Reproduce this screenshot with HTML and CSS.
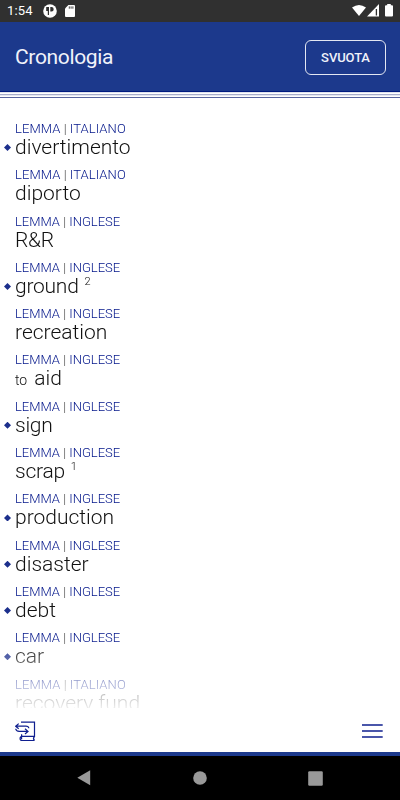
FILE: index.html
```html
<!DOCTYPE html>
<html lang="it">
<head>
<meta charset="utf-8">
<title>Cronologia</title>
<link rel="stylesheet" href="styles.css">
</head>
<body>
<div class="status">
  <span class="time">1:54</span>
  <svg class="status-app" width="14" height="14" viewBox="0 0 14 14"><circle cx="7" cy="7" r="6.800" fill="#fff"/><path d="M3.200 3h2.800v8H4.800V7H3.200zM7.300 3h1.200a2.200 2.200 0 0 1 0 4.400H7.300z" fill="#303030"/></svg>
  <svg class="status-sd" width="10" height="12" viewBox="0 0 10 12"><path d="M3.400 0H9a1 1 0 0 1 1 1v10a1 1 0 0 1-1 1H1a1 1 0 0 1-1-1V3.400z" fill="#fff"/><path d="M4.300 1.400v2.300M6.100 1.400v2.300M7.900 1.400v2.300" stroke="#303030" stroke-width=".9"/></svg>
  <svg class="status-right" width="42" height="14" viewBox="0 0 42 14"><path d="M0 3.600Q7 -1.600 14 3.600L7 12z" fill="#fff"/><path d="M27 0v12.500H15z" fill="#fff"/><path d="M24.400 5v6.500" stroke="#303030" stroke-width="1.300"/><path d="M35.200 0h3.600v1.200H40a1 1 0 0 1 1 1V11.500a1 1 0 0 1-1 1h-6a1 1 0 0 1-1-1V2.200a1 1 0 0 1 1-1h1.200z" fill="#fff"/></svg>
</div>
<header class="header">
  <h1 class="title">Cronologia</h1>
  <button class="clear">SVUOTA</button>
</header>
<div class="rules"></div>
<main class="list">
  <div class="entry starred"><div class="kind it">LEMMA <i>|</i> ITALIANO</div><div class="word">divertimento</div></div>
  <div class="entry"><div class="kind it">LEMMA <i>|</i> ITALIANO</div><div class="word">diporto</div></div>
  <div class="entry"><div class="kind">LEMMA <i>|</i> INGLESE</div><div class="word tight">R&amp;R</div></div>
  <div class="entry starred"><div class="kind">LEMMA <i>|</i> INGLESE</div><div class="word tight">ground<sup>2</sup></div></div>
  <div class="entry"><div class="kind">LEMMA <i>|</i> INGLESE</div><div class="word">recreation</div></div>
  <div class="entry"><div class="kind">LEMMA <i>|</i> INGLESE</div><div class="word"><small>to</small>aid</div></div>
  <div class="entry starred"><div class="kind">LEMMA <i>|</i> INGLESE</div><div class="word tight">sign</div></div>
  <div class="entry"><div class="kind">LEMMA <i>|</i> INGLESE</div><div class="word tight">scrap<sup>1</sup></div></div>
  <div class="entry starred"><div class="kind">LEMMA <i>|</i> INGLESE</div><div class="word">production</div></div>
  <div class="entry starred"><div class="kind">LEMMA <i>|</i> INGLESE</div><div class="word">disaster</div></div>
  <div class="entry starred"><div class="kind">LEMMA <i>|</i> INGLESE</div><div class="word">debt</div></div>
  <div class="entry starred"><div class="kind">LEMMA <i>|</i> INGLESE</div><div class="word">car</div></div>
  <div class="entry"><div class="kind it">LEMMA <i>|</i> ITALIANO</div><div class="word">recovery fund</div></div>
</main>
<footer class="toolbar">
  <svg width="22" height="22" viewBox="0 0 22 22" fill="none" stroke="#0f1f8f" stroke-width="1.200"><path d="M6 1.100h13.500V15.300H7.200a1.900 1.900 0 0 0 0 4.200H19.500M6.600 13.200v5M19.500 15.300q-2 2.100 0 4.200"/><path d="M3.700 2.600L.7 5.200l3 2.600M.9 5.200h10q2.700 0 2.900 2M.7 7.800q.3 2.600 3.500 2.600h8.500M10 7.800l3 2.600-3 2.600"/></svg>
  <svg class="menu" width="21" height="14" viewBox="0 0 21 14" stroke="#0f1f8f" stroke-width="1.600"><path d="M0 1h20.700M0 7h20.700M0 13h20.700"/></svg>
</footer>
<nav class="nav">
  <svg width="14" height="16" viewBox="0 0 14 16"><path d="M13.200.3v15L.3 7.800z" fill="#999"/></svg>
  <svg width="14" height="14" viewBox="0 0 14 14"><circle cx="7" cy="7" r="6.800" fill="#999"/></svg>
  <svg width="15" height="15" viewBox="0 0 15 15"><rect x=".2" y=".2" width="14.600" height="14.600" rx="1.200" fill="#999"/></svg>
</nav>
</body>
</html>
```
FILE: styles.css
```css
* { box-sizing: border-box; }
body {
  margin: 0;
  width: 400px;
  height: 800px;
  overflow: hidden;
  display: flex;
  flex-direction: column;
  background: #fff;
  font-family: Roboto, "Liberation Sans", sans-serif;
}
svg { display: block; flex: none; }
.status {
  flex: none;
  height: 22px;
  padding: 0 6px 0 7px;
  display: flex;
  align-items: center;
  background: #303030;
  color: #fff;
}
.time { width: 36px; font-size: 13px; font-weight: 400; line-height: 22px; letter-spacing: .2px; }
.status-sd { margin-left: 8px; }
.status-right { margin-left: auto; }
.header {
  flex: none;
  height: 70px;
  padding: 0 14px 0 15px;
  display: flex;
  align-items: center;
  justify-content: space-between;
  background: #1c398c;
  border-bottom: 1px solid #001a80;
  color: #fff;
}
.title { margin: 0; font-size: 21px; font-weight: 400; line-height: 28px; letter-spacing: -.35px; color: #f0f2fa; }
.clear {
  width: 81px;
  height: 35px;
  margin-top: 1px;
  padding: 1px 0 0;
  border: 1px solid #e3e7f2;
  border-radius: 6px;
  background: none;
  color: #f0f2fa;
  font: 500 13px/32px Roboto, sans-serif;
  letter-spacing: -.1px;
}
.rules {
  flex: none;
  height: 6px;
  background: linear-gradient(#dfe2ee 0 1px, #fff 1px 2px, #a8aecb 2px 3px, #e6e8f2 3px 4px, #fff 4px 5px, #59659f 5px 6px);
}
.list {
  flex: none;
  height: 610px;
  padding-top: 23px;
  overflow: hidden;
  -webkit-mask-image: linear-gradient(#000 540px, transparent 616px);
  mask-image: linear-gradient(#000 540px, transparent 616px);
}
.entry { position: relative; height: 46.300px; padding-left: 15px; }
.kind { height: 15px; font-size: 13px; font-weight: 300; line-height: 15px; color: #001489; white-space: nowrap; }
.kind.it { letter-spacing: .08px; }
.kind i { font-style: normal; color: #444; }
.word { height: 22px; font-size: 21px; font-weight: 300; line-height: 22px; color: #111; white-space: nowrap; }
.word.tight { letter-spacing: -.25px; }
.word sup { display: inline-block; margin-left: 6px; font-size: 11px; line-height: 11px; vertical-align: 8px; letter-spacing: 0; }
.word small { margin-right: 7px; font-size: 14px; }
.starred::before {
  content: "";
  position: absolute;
  left: 4px;
  top: 23px;
  width: 7px;
  height: 7px;
  background: #1c2f8c;
  clip-path: polygon(50% 0, 100% 50%, 50% 100%, 0 50%);
}
.toolbar {
  flex: none;
  height: 48px;
  padding: 6px 17px 2px 15px;
  display: flex;
  align-items: center;
  justify-content: space-between;
  border-bottom: 4px solid #1c398c;
  background: #fff;
}
.menu { margin-bottom: 2px; }
.nav {
  flex: none;
  height: 44px;
  padding: 0 77px 0 77px;
  display: flex;
  align-items: center;
  justify-content: space-between;
  background: #000;
}
```
